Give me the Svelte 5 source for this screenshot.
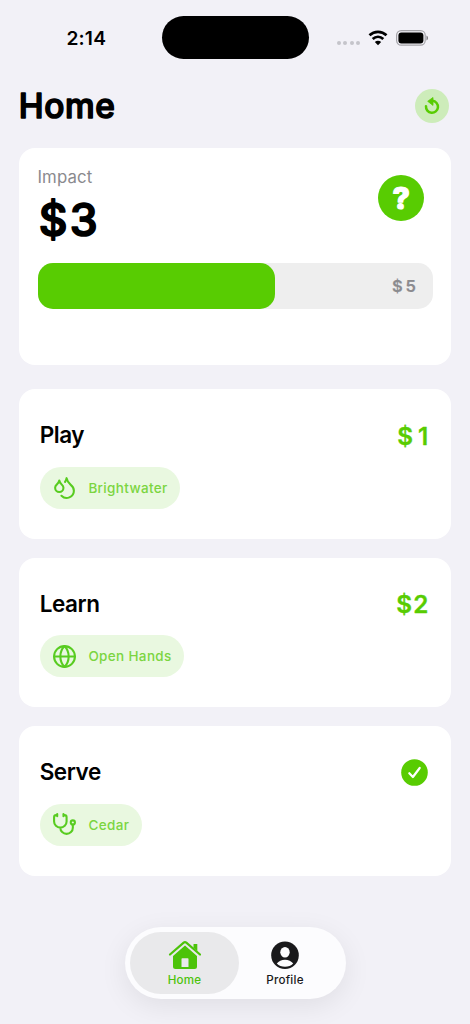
<script>
  const activities = [
    { title: 'Play', org: 'Brightwater', icon: 'drops', amount: '$1', width: 31.5, pill: 140.5, spacing: 0.35 },
    { title: 'Learn', org: 'Open Hands', icon: 'globe', amount: '$2', width: 32.5, pill: 144.5, spacing: 0.35 },
    { title: 'Serve', org: 'Cedar', icon: 'steth', amount: null, width: 0, pill: 102, spacing: 0.4 }
  ];
  const raised = 3;
  const goal = 5;
</script>

{#snippet rounded(text, width, height, size, stroke, weight, cls)}
  <svg class="rounded {cls}" {width} {height} role="img" aria-label={text}>
    <text x={stroke / 2} y={height - stroke} font-size={size} font-weight={weight} stroke-width={stroke} textLength={text.length > 1 ? width - stroke : null}>{text}</text>
  </svg>
{/snippet}

<div class="screen">
  <div class="status">
    <span class="time">2:14</span>
    <div class="island"></div>
    <div class="indicators">
      <div class="dots"><i></i><i></i><i></i><i></i></div>
      <svg class="wifi" width="20" height="16" viewBox="0 0 20 16">
        <path d="M1.500 5.300C6.300.6 13.700.6 18.500 5.300M4.700 9.100C7.800 6.200 12.200 6.200 15.300 9.100" fill="none" stroke="#000" stroke-width="2.700" />
        <path d="M10 15.200 6.800 12Q10 9.400 13.200 12Z" />
      </svg>
      <svg width="33" height="16" viewBox="0 0 33 16">
        <rect x=".6" y=".6" width="28.600" height="14.600" rx="4.600" fill="none" stroke="#a4a3a8" stroke-width="1.200" />
        <rect x="2.400" y="2.500" width="25" height="10.900" rx="3" />
        <path d="M30.500 5.500Q32 6.300 32 8T30.500 10.500Z" fill="#77767a" />
      </svg>
    </div>
  </div>

  <header>
    {@render rounded('Home', 97.5, 28.5, 33.4, 1.5, 500, 'title')}
    <button class="reset" aria-label="Reset">
      <svg width="34" height="34" viewBox="0 0 34 34">
        <path d="M11 17.200A6 6 0 1 0 17.500 11.800" fill="none" stroke="#58cc02" stroke-width="2.500" stroke-linecap="round" />
        <path d="M18 8.500V16.400L12.700 12.300Z" fill="#58cc02" stroke="#58cc02" stroke-width=".8" stroke-linejoin="round" />
      </svg>
    </button>
  </header>

  <main>
    <section class="card impact">
      <div class="top">
        <div>
          <div class="caption">Impact</div>
          {@render rounded('$3', 60.5, 39.5, 44.5, 1.7, 500, 'total')}
        </div>
        <div class="help">{@render rounded('?', 19, 24, 30, 1.2, 800, 'white')}</div>
      </div>
      <div class="bar">
        <div class="fill" style="width: {(raised / goal) * 100}%"></div>
        {@render rounded('$5', 24, 13, 16.5, 0.2, 600, 'gray')}
      </div>
    </section>

    {#each activities as a}
      <section class="card activity">
        <div class="line">
          <h2>{a.title}</h2>
          {#if a.amount}
            {@render rounded(a.amount, a.width, 19, 24.3, 0.3, 600, 'green')}
          {:else}
            <svg width="27" height="27" viewBox="0 0 27 27">
              <circle cx="13.500" cy="13.500" r="13.300" fill="#58cc02" />
              <path d="M8.300 14.200 11.900 18 18.700 9" fill="none" stroke="#fff" stroke-width="2.200" stroke-linecap="round" stroke-linejoin="round" />
            </svg>
          {/if}
        </div>
        <div class="pill" style="width: {a.pill}px">
          <svg class="icon" width="25" height="25" viewBox="0 0 24 24">
            {#if a.icon === 'drops'}
              <path d="M7 16.300c2.200 0 4-1.830 4-4.050 0-1.160-.57-2.260-1.710-3.190S7.290 6.750 7 5.300c-.29 1.450-1.140 2.840-2.290 3.760S3 11.100 3 12.250c0 2.220 1.800 4.050 4 4.050z" />
              <path d="M12.560 6.600A10.970 10.970 0 0 0 14 3.020c.5 2.500 2 4.900 4 6.500s3 3.500 3 5.500a6.980 6.980 0 0 1-11.910 4.970" />
            {:else if a.icon === 'globe'}
              <circle cx="12" cy="12" r="10" />
              <path d="M12 2a14.500 14.500 0 0 0 0 20 14.500 14.500 0 0 0 0-20M2 12h20" />
            {:else}
              <path d="M11 2v2M5 2v2M5 3H4a2 2 0 0 0-2 2v4a6 6 0 0 0 12 0V5a2 2 0 0 0-2-2h-1M8 15a6 6 0 0 0 12 0v-3" />
              <circle cx="20" cy="10" r="2" />
            {/if}
          </svg>
          <span style="letter-spacing: {a.spacing}px">{a.org}</span>
        </div>
      </section>
    {/each}
  </main>

  <nav>
    <div class="tab active">
      <svg width="34" height="30" viewBox="0 0 34 30">
        <path d="M2 14.500 15.700 2.600Q17 1.500 18.300 2.600L32 14.500" fill="none" stroke="currentColor" stroke-width="2.200" stroke-linecap="round" />
        <path d="M26 4h2.800q.5 0 .5.500V11L25.500 7.800V4.500Q25.500 4 26 4Z" fill="currentColor" />
        <path fill-rule="evenodd" d="M17 5.500 29 16V26.500Q29 29 26.500 29H7.500Q5 29 5 26.500V16ZM13.500 19Q13.500 18.300 14.200 18.300H19.800Q20.500 18.300 20.500 19V27H13.500Z" fill="currentColor" />
      </svg>
      <span>Home</span>
    </div>
    <div class="tab">
      <svg width="34" height="30" viewBox="0 0 34 30">
        <circle cx="17" cy="15.300" r="13.800" fill="currentColor" />
        <ellipse cx="17" cy="12.300" rx="4.700" ry="5.300" fill="#fcfcfe" />
        <path d="M8.800 23.500Q11.700 19.700 17 19.700T25.200 23.500Q22 26.800 17 26.800T8.800 23.500Z" fill="#fcfcfe" />
      </svg>
      <span>Profile</span>
    </div>
  </nav>
</div>

<style>
  :global(body) { background: #f2f1f7; }
  .screen {
    width: 470px; height: 1024px; box-sizing: border-box; overflow: hidden;
    display: flex; flex-direction: column;
    background: #f2f1f7; color: #000; font-family: Inter, sans-serif;
  }
  .status { height: 75.500px; flex: none; display: grid; grid-template-columns: 161.500px 147px 1fr; align-items: center; }
  .time { padding-left: 66.500px; font-size: 19.200px; font-weight: 600; letter-spacing: .15px; }
  .island { height: 43px; border-radius: 22px; background: #000; }
  .indicators { display: flex; align-items: center; padding-left: 28.500px; }
  .dots { display: flex; gap: 2.300px; padding-top: 10px; }
  .dots i { width: 4px; height: 4px; border-radius: 50%; background: #c5c4ca; }
  .wifi { margin: 0 8px 0 8.500px; }
  header { height: 72px; flex: none; box-sizing: border-box; padding: 12px 21.500px 24px 18.300px; display: flex; align-items: center; justify-content: space-between; }
  .reset { width: 34px; height: 34px; padding: 0; border: 0; border-radius: 50%; background: #cdecba; }
  svg { display: block; flex: none; }
  .rounded { overflow: visible; fill: currentColor; stroke: currentColor; stroke-linejoin: round; }
  .white { color: #fff; }
  .gray { color: #8b8b8f; }
  .green { color: #58cc02; }
  main { padding: 0 19px; display: flex; flex-direction: column; gap: 19px; }
  .card { background: #fff; border-radius: 16px; box-sizing: border-box; }
  .impact { height: 217.500px; padding: 18px 18.500px; margin-bottom: 5px; }
  .top { display: flex; justify-content: space-between; height: 97px; }
  .caption { font-size: 16.800px; line-height: 23px; color: #8a8a8e; letter-spacing: .1px; margin-bottom: 9px; }
  .help { width: 46px; height: 46px; margin: 9.500px 8.500px 0 0; border-radius: 50%; background: #58cc02; display: flex; align-items: center; justify-content: center; }
  .help :global(svg) { margin-bottom: 1px; }
  .bar { height: 46.500px; border-radius: 15px; background: #eee; display: flex; align-items: center; justify-content: space-between; }
  .fill { height: 100%; border-radius: 15px; background: #58cc02; flex: none; }
  .bar :global(.gray) { margin-right: 17px; }
  .activity { height: 149.700px; padding: 32px 23px 0 20.700px; }
  .line { display: flex; align-items: center; justify-content: space-between; height: 28px; margin-bottom: 17.500px; }
  h2 { margin: 0; font-size: 22.500px; font-weight: 600; letter-spacing: -.45px; line-height: 27px; margin-bottom: 1px; }
  .pill { height: 42px; box-sizing: border-box; padding-left: 12.700px; border-radius: 21px; background: #e9f8e0; display: flex; align-items: center; gap: 11px; font-size: 13.500px; font-weight: 500; color: #7bd541; white-space: nowrap; }
  .icon { fill: none; stroke: #58cc20; stroke-width: 2; stroke-linecap: round; stroke-linejoin: round; }
  nav { width: 220.500px; height: 72px; flex: none; box-sizing: border-box; margin: 50.500px 0 0 125px; padding: 5px; border-radius: 36px; background: #fcfcfe; box-shadow: 0 7px 28px rgba(0,0,0,.08); display: flex; }
  .tab { width: 109px; height: 62px; box-sizing: border-box; border-radius: 31px; padding-top: 8px; display: flex; flex-direction: column; align-items: center; color: #19191b; font-size: 11.600px; font-weight: 500; line-height: 20px; letter-spacing: .25px; flex: none; }
  .tab:last-child { width: 92px; }
  .active { background: #e9e9eb; color: #4cc30a; }
</style>
